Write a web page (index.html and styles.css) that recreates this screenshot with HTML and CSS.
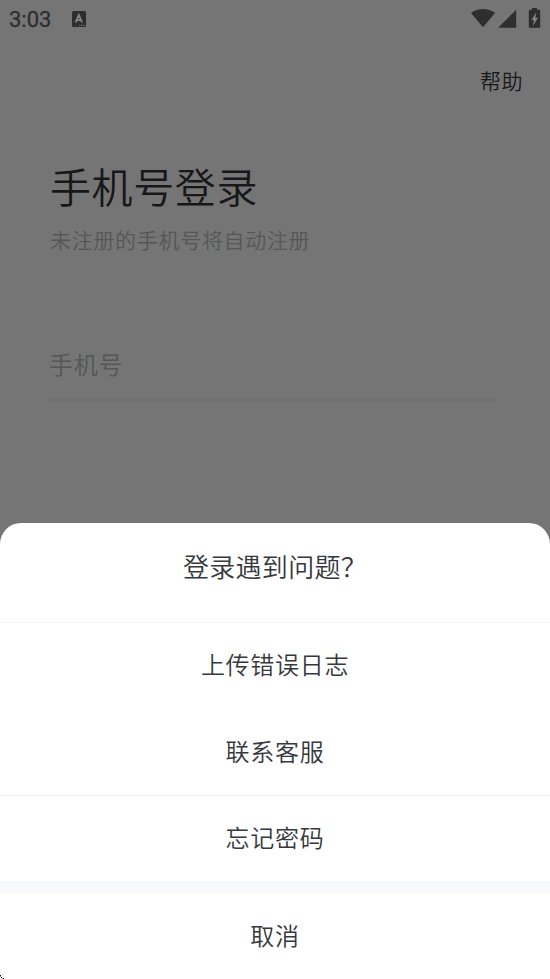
FILE: index.html
```html
<!DOCTYPE html>
<html lang="zh-CN">
<head>
    <meta charset="UTF-8">
    <meta name="viewport" content="width=device-width, initial-scale=1.0">
    <title>手机号登录</title>
    <link rel="stylesheet" href="styles.css">
</head>
<body>
    <div class="wrapper">
        <div class="page">
            <div class="status">
                <span class="time">3:03</span>
                <svg class="app" width="14" height="16" viewBox="0 0 14 16">
                    <rect width="14" height="16" rx="1.5" fill="#2e2e2e"/>
                    <path d="M3.5 11.5 6.8 4 10.1 11.5M4.7 9.2H8.9" fill="none" stroke="#868686" stroke-width="1.8"/>
                    <path d="M7 14.3H13" stroke="#777" stroke-width="1" stroke-dasharray="1.5 .5"/>
                </svg>
                <svg class="signal" width="70" height="20" viewBox="0 0 70 20" fill="#2e2e2e">
                    <path d="M0 4C7-1.3 17-1.3 24 4L12 18.3Z"/>
                    <path d="M45.2.8V18.8H27.2Z"/>
                    <path d="M61-1H66V.8H68.4Q69.2.8 69.2 1.6V18Q69.2 18.8 68.4 18.8H58.6Q57.8 18.8 57.8 18V1.6Q57.8.8 58.6.8H61Z"/>
                    <path d="M65.2 3.6 60.4 11H63L61.8 17 67 8.8H64.4Z" fill="#858585"/>
                </svg>
            </div>
            <div class="help">帮助</div>
            <h1>手机号登录</h1>
            <p class="tip">未注册的手机号将自动注册</p>
            <div class="phone">手机号</div>
        </div>
        <div class="sheet">
            <div class="title">登录遇到问题？</div>
            <ul>
                <li>上传错误日志</li>
                <li class="line">联系客服</li>
                <li>忘记密码</li>
            </ul>
            <div class="cancel">取消</div>
        </div>
        <svg class="corner" width="4" height="4" viewBox="0 0 4 4">
            <path d="M0 0H1V1H0ZM1 2H2V3H1ZM3 3H4V4H3Z" fill="#000"/>
            <path d="M0 1H1V2H0ZM2 3H3V4H2Z" fill="#999"/>
        </svg>
    </div>
</body>
</html>
```
FILE: styles.css
```css
*{
    margin: 0;
    padding: 0;
    list-style: none;
    box-sizing: border-box;
}
body{
    background: #757575;
    font-family: "Noto Sans CJK SC", sans-serif;
    font-weight: 350;
}
.wrapper{
    position: relative;
    height: 979px;
    overflow: hidden;
    display: flex;
    flex-direction: column;
}
.page{
    height: 523px;
}
.status{
    height: 38px;
    display: flex;
    align-items: center;
    padding: 0 9px;
}
.time{
    width: 63px;
    font-family: Roboto, sans-serif;
    font-size: 22px;
    font-weight: 400;
    -webkit-text-stroke: .3px #2e2e2e;
    color: #2e2e2e;
}
.signal{
    margin-left: auto;
    overflow: visible;
}
.help{
    margin-top: 26px;
    padding-right: 27px;
    line-height: 32px;
    font-size: 21px;
    letter-spacing: .5px;
    text-align: right;
    color: #171819;
}
h1{
    margin-top: 59px;
    padding-left: 50px;
    line-height: 60px;
    font-size: 41px;
    font-weight: 350;
    letter-spacing: .6px;
    color: #171819;
}
.tip{
    margin-top: 9px;
    padding-left: 50px;
    line-height: 30px;
    font-size: 21px;
    letter-spacing: .7px;
    color: #555657;
}
.phone{
    height: 77px;
    margin: 70px 50px 0 48px;
    padding-left: 1px;
    line-height: 80px;
    font-size: 24px;
    letter-spacing: .7px;
    color: #555657;
    border-bottom: 2px solid #707070;
}
.sheet{
    height: 456px;
    background: #fff;
    border-radius: 21px 21px 0 0;
    text-align: center;
    color: #35383c;
}
.title{
    height: 100px;
    line-height: 86px;
    font-size: 26px;
    letter-spacing: .3px;
    border-bottom: 1px solid #f3f4f5;
}
.sheet li,
.cancel{
    height: 86px;
    line-height: 82px;
    font-size: 24px;
    letter-spacing: .7px;
}
.sheet li:last-child{
    height: 85px;
}
.sheet li.line{
    height: 87px;
    line-height: 83px;
    border-bottom: 1px solid #f3f4f5;
}
.cancel{
    height: 98px;
    line-height: 83px;
    border-top: 12px solid #f7f9fd;
}
.corner{
    position: absolute;
    left: 0;
    bottom: 0;
}
```
